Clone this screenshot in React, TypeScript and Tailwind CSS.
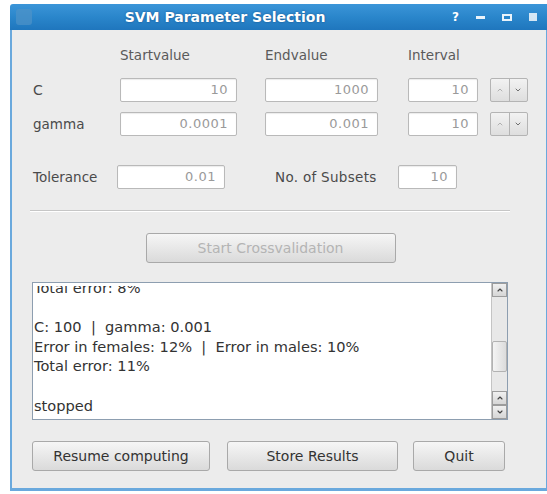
import { ChevronDown, ChevronUp } from 'lucide-react';

const font = { fontFamily: '"DejaVu Sans", "Liberation Sans", sans-serif' };

const log = [
  'Total error: 8%',
  '',
  'C: 100  |  gamma: 0.001',
  'Error in females: 12%  |  Error in males: 10%',
  'Total error: 11%',
  '',
  'stopped',
];

function NumberField({ value, width }: { value: string; width: string }) {
  return (
    <div
      className={`${width} h-[24px] flex items-center justify-end pr-2 bg-white border border-[#b9b9b9] rounded-[2px] text-[13px] tracking-[0.5px] text-[#9a9a9a] shadow-[inset_0_1px_1px_rgba(0,0,0,0.08)]`}
    >
      {value}
    </div>
  );
}

function Spinner() {
  return (
    <div className="w-[38px] h-[24px] flex border border-[#b4b4b4] rounded-[2px] bg-gradient-to-b from-[#f2f2f2] to-[#dedede]">
      <div className="flex-1 flex items-center justify-center border-r border-[#b4b4b4]">
        <ChevronUp size={8} strokeWidth={3} className="text-[#b0b0b0]" />
      </div>
      <div className="flex-1 flex items-center justify-center">
        <ChevronDown size={8} strokeWidth={3} className="text-[#707070]" />
      </div>
    </div>
  );
}

function PushButton({ label, width, disabled }: { label: string; width: string; disabled?: boolean }) {
  return (
    <button
      className={`${width} h-[30px] flex items-center justify-center border border-[#a9a9a9] rounded-[3px] bg-gradient-to-b from-[#f6f6f6] to-[#dadada] text-[14px] ${
        disabled ? 'text-[#b4b4b4]' : 'text-[#333]'
      }`}
    >
      {label}
    </button>
  );
}

function ScrollArrow({ up }: { up?: boolean }) {
  return (
    <div className="h-[14px] flex items-center justify-center border border-[#9c9c9c] bg-gradient-to-b from-[#f0f0f0] to-[#d6d6d6]">
      {up ? (
        <ChevronUp size={8} strokeWidth={3.5} className="text-[#444]" />
      ) : (
        <ChevronDown size={8} strokeWidth={3.5} className="text-[#444]" />
      )}
    </div>
  );
}

export default function App() {
  return (
    <div className="w-[547px] h-[494px] bg-white overflow-hidden pt-[4px] pl-[10px]" style={font}>
      <div className="h-[487px] flex flex-col">
        {/* title bar */}
        <div className="h-[26px] shrink-0 flex items-center bg-gradient-to-b from-[#3b95d8] via-[#2a86cb] to-[#1f76bd] rounded-tl-[3px]">
          <div className="w-[16px] h-[16px] ml-[6px] rounded-[3px] bg-[#4f93c7] opacity-70" />
          <div className="flex-1 text-center text-white font-bold text-[14px] -ml-[34px] [text-shadow:0_0_2px_rgba(0,40,90,0.6)]">
            SVM Parameter Selection
          </div>
          <div className="flex items-center gap-[17px] pr-[10px] text-white text-[12px] font-bold">
            <span>?</span>
            <span className="w-[9px] h-[3px] bg-white/90" />
            <span className="w-[10px] h-[7px] border-2 border-white/90" />
            <span className="w-[8px] h-[8px] bg-white/80" />
          </div>
        </div>

        {/* window body */}
        <div className="flex-1 bg-[#ececec] border-l-2 border-b-[3px] border-r border-[#6aa9dd] pl-[21px] pr-[38px] pt-[17px]">
          <div className="grid grid-cols-[87px_145px_143px_82px_38px] items-center text-[13.5px] text-[#4a4a4a]">
            <div className="h-[16px]" />
            <div className="h-[16px] leading-[16px] text-[#5a5a5a]">Startvalue</div>
            <div className="h-[16px] leading-[16px] text-[#5a5a5a]">Endvalue</div>
            <div className="h-[16px] leading-[16px] text-[#5a5a5a]">Interval</div>
            <div className="h-[16px]" />

            <div className="mt-[15px] text-[14px]">C</div>
            <div className="mt-[15px]"><NumberField value="10" width="w-[117px]" /></div>
            <div className="mt-[15px]"><NumberField value="1000" width="w-[113px]" /></div>
            <div className="mt-[15px]"><NumberField value="10" width="w-[70px]" /></div>
            <div className="mt-[15px]"><Spinner /></div>

            <div className="mt-[10px]">gamma</div>
            <div className="mt-[10px]"><NumberField value="0.0001" width="w-[117px]" /></div>
            <div className="mt-[10px]"><NumberField value="0.001" width="w-[113px]" /></div>
            <div className="mt-[10px]"><NumberField value="10" width="w-[70px]" /></div>
            <div className="mt-[10px]"><Spinner /></div>
          </div>

          <div className="mt-[29px] flex items-center text-[13.5px] text-[#4a4a4a]">
            <div className="w-[84px]">Tolerance</div>
            <NumberField value="0.01" width="w-[108px]" />
            <div className="ml-[50px] w-[123px] tracking-[0.3px]">No. of Subsets</div>
            <NumberField value="10" width="w-[59px]" />
          </div>

          <div className="mt-[21px] -ml-[3px] -mr-[2px] h-0 border-t border-[#c6c6c6] border-b border-b-white" />

          <div className="mt-[21px] flex justify-center">
            <PushButton label="Start Crossvalidation" width="w-[250px]" disabled />
          </div>

          {/* output log */}
          <div className="mt-[19px] h-[138px] -ml-[1px] flex bg-white border border-[#8d9eb0]">
            <div className="flex-1 mt-[3px] overflow-hidden pl-[1px] text-[14.6px] text-[#333]">
              <div className="-mt-[8px]">
                {log.map((line, i) => (
                  <div key={i} className="h-[19.6px] leading-[19.6px] whitespace-pre">
                    {line}
                  </div>
                ))}
              </div>
            </div>
            <div className="w-[16px] flex flex-col bg-[#e8e8e8] border-l border-[#c4c4c4]">
              <ScrollArrow up />
              <div className="flex-1 flex flex-col pt-[44px]">
                <div className="h-[31px] border border-[#b2b2b2] rounded-[2px] bg-gradient-to-r from-[#f4f4f4] to-[#dcdcdc]" />
              </div>
              <ScrollArrow up />
              <ScrollArrow />
            </div>
          </div>

          <div className="mt-[21px] flex items-center -ml-[1px]">
            <PushButton label="Resume computing" width="w-[178px]" />
            <div className="ml-[17px]">
              <PushButton label="Store Results" width="w-[171px]" />
            </div>
            <div className="ml-[15px]">
              <PushButton label="Quit" width="w-[92px]" />
            </div>
          </div>
        </div>
      </div>
    </div>
  );
}
